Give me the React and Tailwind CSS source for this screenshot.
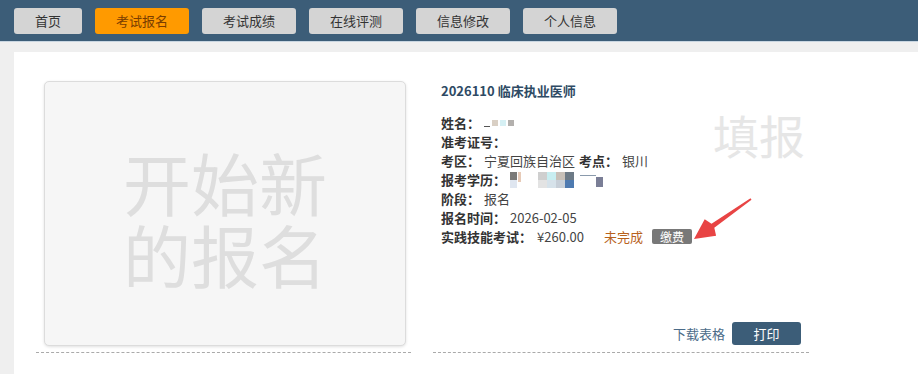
import React from 'react';

const navItems = ['首页', '考试报名', '考试成绩', '在线评测', '信息修改', '个人信息'];

const Blur = ({ blocks }) => (
  <span className="inline-flex items-center h-[19px] align-top">
    {blocks.map((b, i) => (
      <span key={i} className={b} />
    ))}
  </span>
);

const Field = ({ label, children }) => (
  <div className="h-[19px] leading-[19px] flex items-center whitespace-nowrap">
    <span className="font-bold text-[#333]">{label}：</span>
    <span className="ml-[4px] text-[#444] flex items-center">{children}</span>
  </div>
);

const App = () => {
  return (
    <div
      className="w-[918px] h-[374px] overflow-hidden bg-[#efefef] text-[13px]"
      style={{ fontFamily: '"Noto Sans CJK SC", "Noto Sans", sans-serif' }}
    >
      <nav className="h-[42px] bg-[#3c5d78] border-b border-[#c9d6e1] flex items-center gap-[13px] pl-[14px]">
        {navItems.map((item, i) => (
          <button
            key={item}
            className={
              'h-[26px] rounded-[3px] text-[13px] ' +
              (i === 0 ? 'w-[68px] ' : 'w-[94px] ') +
              (i === 1 ? 'bg-[#ff9a00] text-[#7a3d00]' : 'bg-[#d4d4d4] text-[#333]')
            }
          >
            {item}
          </button>
        ))}
      </nav>

      <div className="pt-[10px] pl-[14px]">
        <div className="bg-white h-[322px] pl-[22px] pt-[29px] flex gap-[22px]">
          {/* left column */}
          <div className="w-[375px] h-[272px] border-b border-dashed border-[#aaa] pl-[8px] pr-[5px]">
            <div className="w-[362px] h-[265px] bg-[#f6f6f6] border border-[#dcdcdc] rounded-[5px] shadow-[0_1px_3px_rgba(0,0,0,0.12)] flex flex-col items-center justify-center pt-[8px]">
              <div className="text-[68px] leading-[72px] h-[72px] text-[#dedede]">开始新</div>
              <div className="text-[68px] leading-[72px] h-[72px] text-[#dedede]">的报名</div>
            </div>
          </div>

          {/* right column */}
          <div className="relative w-[376px] h-[272px] border-b border-dashed border-[#aaa] px-[8px] flex flex-col">
            <div className="h-[19px] leading-[19px] font-bold text-[#2e4a64]">2026110 临床执业医师</div>
            <div className="mt-[13px]">
              <Field label="姓名">
                <Blur
                  blocks={[
                    'w-[6px] h-[1px] bg-[#555] mt-[8px] mr-[2px]',
                    'w-[6px] h-[6px] bg-[#d9cfc4] mr-[2px]',
                    'w-[6px] h-[6px] bg-[#d6f0f4] mr-[2px]',
                    'w-[6px] h-[6px] bg-[#b3b0ad]',
                  ]}
                />
              </Field>
              <Field label="准考证号" />
              <div className="h-[19px] leading-[19px] flex items-center whitespace-nowrap">
                <span className="font-bold text-[#333]">考区：</span>
                <span className="ml-[4px] text-[#444]">宁夏回族自治区</span>
                <span className="ml-[4px] font-bold text-[#333]">考点：</span>
                <span className="ml-[4px] text-[#444]">银川</span>
              </div>
              <Field label="报考学历">
                <span className="inline-flex items-center h-[19px]">
                  <span className="flex flex-col mr-[1px]">
                    <span className="w-[7px] h-[8px] bg-[#7a7a78]" />
                    <span className="w-[7px] h-[8px] bg-[#dfe6f0]" />
                  </span>
                  <span className="w-[3px] h-[10px] bg-[#e7cbb8] mr-[17px] -mt-[6px]" />
                  <span className="flex flex-col">
                    <span className="flex">
                      <span className="w-[9px] h-[8px] bg-[#cfcfcf]" />
                      <span className="w-[9px] h-[8px] bg-[#c8eef1]" />
                      <span className="w-[9px] h-[8px] bg-[#c8c0b8]" />
                      <span className="w-[9px] h-[8px] bg-[#6d7a86]" />
                    </span>
                    <span className="flex">
                      <span className="w-[9px] h-[8px] bg-[#e3e3e3]" />
                      <span className="w-[9px] h-[8px] bg-[#d6e2ea]" />
                      <span className="w-[9px] h-[8px] bg-[#c7cfd8]" />
                      <span className="w-[9px] h-[8px] bg-[#4e7ab0]" />
                    </span>
                  </span>
                  <span className="ml-[6px] w-[16px] h-[3px] border-t border-[#8a9aac] -mt-[6px]" />
                  <span className="w-[7px] h-[10px] bg-[#7a7e96] mt-[4px]" />
                </span>
              </Field>
              <Field label="阶段">报名</Field>
              <Field label="报名时间">2026-02-05</Field>
              <div className="h-[19px] leading-[19px] flex items-center whitespace-nowrap">
                <span className="font-bold text-[#333]">实践技能考试：</span>
                <span className="ml-[5px] text-[#444]">¥260.00</span>
                <span className="ml-[20px] text-[#b8621c]">未完成</span>
                <span className="ml-[9px] h-[15px] leading-[15px] px-[8px] rounded-[2px] bg-[#787878] text-white text-[12px]">
                  缴费
                </span>
              </div>
            </div>

            <div className="absolute left-[280px] top-[30px] text-[46px] leading-[46px] text-[#e6e6e6]">填报</div>

            <svg className="absolute left-[257px] top-[114px]" width="66" height="48" viewBox="0 0 66 48">
              <polygon
                points="4,44 14.7,24.3 21.5,28.8 60.5,3.3 61.5,4.7 24.3,32.8 26.1,40.7"
                fill="#e84444"
              />
            </svg>

            <div className="mt-auto mb-[7px] flex items-center justify-end gap-[7px]">
              <span className="text-[#4b6b88]">下载表格</span>
              <button className="w-[69px] h-[23px] rounded-[3px] bg-[#3c5d78] text-white text-[13px]">打印</button>
            </div>
          </div>
        </div>
      </div>
    </div>
  );
};

export default App;
